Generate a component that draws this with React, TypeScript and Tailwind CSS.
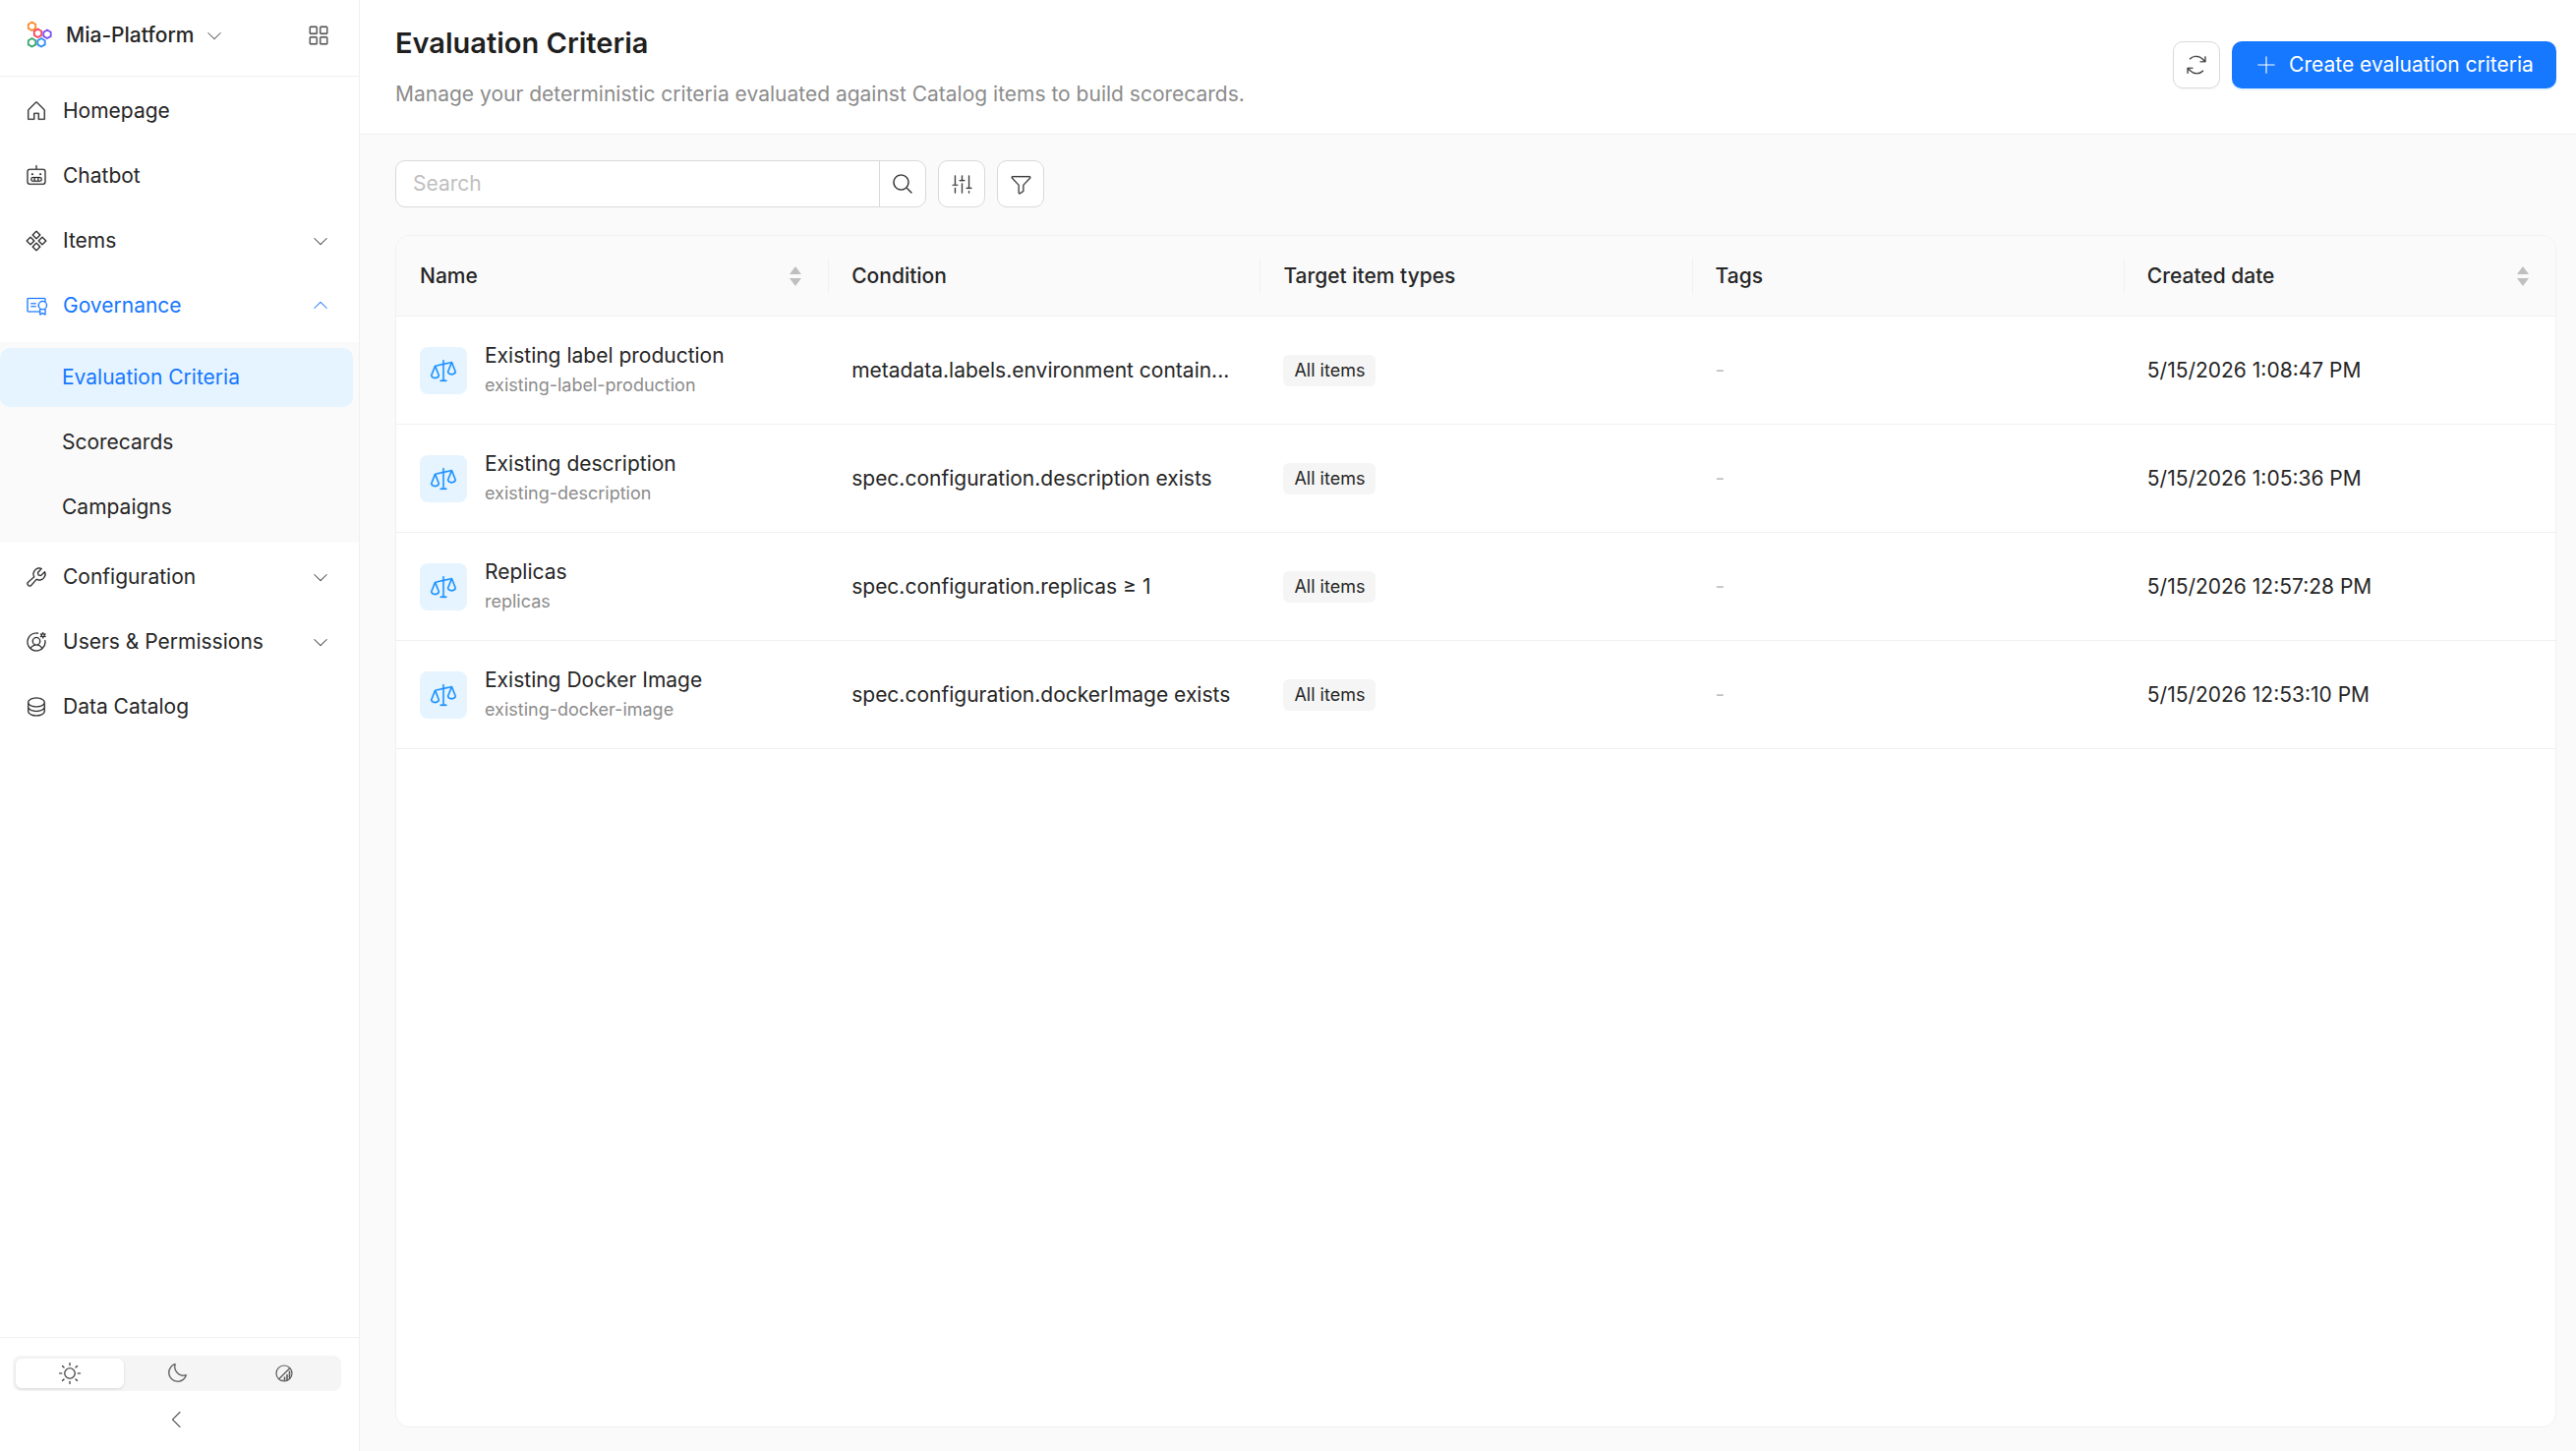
import React from "react";
import {
  PiHouseLight, PiRobotLight, PiDiamondsFourLight, PiCertificateLight, PiWrenchLight,
  PiUserCircleGearLight, PiDatabaseLight, PiSquaresFourLight, PiCaretDownLight, PiCaretUpLight,
  PiCaretLeftLight, PiArrowsClockwiseLight, PiPlusLight, PiMagnifyingGlassLight, PiFadersLight,
  PiFunnelLight, PiScalesLight, PiSunLight, PiMoonLight,
} from "react-icons/pi";

const W = 2;

const Logo = () => (
  <svg width="28" height="30" viewBox="0 0 28 30" fill="none" strokeWidth="1.8">
    <path d="M6.5 1.5l3.7 2.2v4.2L6.5 10 2.8 7.9V3.7z" stroke="#fa8c2b" />
    <path d="M12.5 8.5l3.7 2.2v4.2L12.5 17l-3.7-2.1v-4.2z" stroke="#f5465f" />
    <path d="M22 9.5l3.7 2.2v4.2L22 18l-3.7-2.1v-4.2z" stroke="#7b4ff0" />
    <path d="M6.5 18l3.7 2.2v4.2L6.5 26.5l-3.7-2.1v-4.2z" stroke="#35a86b" />
    <path d="M16 18l3.7 2.2v4.2L16 26.5l-3.7-2.1v-4.2z" stroke="#2f8df5" />
  </svg>
);

const Contrast = () => (
  <svg width="20" height="20" viewBox="0 0 20 20" fill="none">
    <circle cx="10" cy="10" r="8" stroke="#595959" strokeWidth="1.2" />
    <path d="M16 4.5L4.5 16" stroke="#595959" strokeWidth="1.2" />
    <path d="M8 16.5v1M10.5 13.5v4.5M13 11v6.3M15.5 7.5v8" stroke="#595959" strokeWidth="1.6" />
  </svg>
);

const Sort = () => (
  <svg width="14" height="20" viewBox="0 0 14 20" className="shrink-0">
    <path d="M7 0l6 8H1z" fill="#bfbfbf" />
    <path d="M7 20l6-8H1z" fill="#bfbfbf" />
  </svg>
);

type NavProps = { icon: React.ReactNode; label: string; caret?: "down" | "up"; active?: boolean };
const Nav = ({ icon, label, caret, active }: NavProps) => (
  <div className={`flex h-[66px] items-center pl-[25px] pr-[29px] text-[21px] ${active ? "text-[#1677ff]" : "text-[#262626]"}`}>
    <span className="flex w-[39px] shrink-0 text-[24px]">{icon}</span>
    <span className="flex-1">{label}</span>
    {caret === "down" && <PiCaretDownLight className="text-[20px] text-[#404040]" />}
    {caret === "up" && <PiCaretUpLight className="text-[20px] text-[#1677ff]" />}
  </div>
);

const Sub = ({ label, active }: { label: string; active?: boolean }) => (
  <div className={`flex h-[60px] items-center rounded-[10px] pl-[63px] text-[21px] ${active ? "bg-[#e6f4ff] text-[#1677ff]" : "text-[#262626]"}`}>
    {label}
  </div>
);

const rows = [
  { name: "Existing label production", id: "existing-label-production", cond: "metadata.labels.environment contain...", date: "5/15/2026 1:08:47 PM" },
  { name: "Existing description", id: "existing-description", cond: "spec.configuration.description exists", date: "5/15/2026 1:05:36 PM" },
  { name: "Replicas", id: "replicas", cond: "spec.configuration.replicas ≥ 1", date: "5/15/2026 12:57:28 PM" },
  { name: "Existing Docker Image", id: "existing-docker-image", cond: "spec.configuration.dockerImage exists", date: "5/15/2026 12:53:10 PM" },
];

const Th = ({ label, sort, first }: { label: string; sort?: boolean; first?: boolean }) => (
  <div className="flex items-center">
    {!first && <div className="h-[36px] w-px shrink-0 bg-[#f0f0f0]" />}
    <div className={`flex flex-1 items-center justify-between pr-[26px] text-[21px] font-medium text-[#262626] ${first ? "pl-[24px]" : "pl-[23px]"}`}>
      <span>{label}</span>
      {sort && <Sort />}
    </div>
  </div>
);

export default function App() {
  return (
    <div className="flex h-screen w-full overflow-hidden bg-white font-['Inter',sans-serif]">
      <aside className="flex w-[366px] shrink-0 flex-col border-r border-[#f0f0f0] bg-white">
        <div className="flex h-[78px] shrink-0 items-center border-b border-[#f0f0f0] pb-[6px] pl-[26px] pr-[27px]">
          <Logo />
          <span className="ml-[13px] text-[21px] font-medium text-[#262626]">Mia-Platform</span>
          <PiCaretDownLight className="ml-[10px] text-[20px] text-[#595959]" />
          <PiSquaresFourLight strokeWidth={W} className="ml-auto text-[28px] text-[#595959]" />
        </div>
        <nav className="flex flex-1 flex-col pt-[2px]">
          <Nav icon={<PiHouseLight strokeWidth={W} />} label="Homepage" />
          <Nav icon={<PiRobotLight strokeWidth={W} />} label="Chatbot" />
          <Nav icon={<PiDiamondsFourLight strokeWidth={W} />} label="Items" caret="down" />
          <Nav icon={<PiCertificateLight strokeWidth={W} />} label="Governance" caret="up" active />
          <div className="mb-[2px] mt-[4px] flex flex-col gap-[6px] bg-[#fafafa] py-[6px] pr-[6px]">
            <Sub label="Evaluation Criteria" active />
            <Sub label="Scorecards" />
            <Sub label="Campaigns" />
          </div>
          <Nav icon={<PiWrenchLight strokeWidth={W} />} label="Configuration" caret="down" />
          <Nav icon={<PiUserCircleGearLight strokeWidth={W} />} label="Users & Permissions" caret="down" />
          <Nav icon={<PiDatabaseLight strokeWidth={W} />} label="Data Catalog" />
        </nav>
        <div className="flex h-[116px] shrink-0 flex-col border-t border-[#f0f0f0] px-[13px] pb-[4px] pt-[18px]">
          <div className="flex h-[36px] w-[334px] items-center rounded-[8px] bg-[#f5f5f5] p-[3px]">
            <div className="flex h-[30px] w-[110px] items-center justify-center rounded-[6px] bg-white text-[24px] text-[#404040] shadow-[0_1px_3px_rgba(0,0,0,0.12)]">
              <PiSunLight strokeWidth={W} />
            </div>
            <div className="flex flex-1 items-center justify-center text-[24px] text-[#595959]">
              <PiMoonLight strokeWidth={W} />
            </div>
            <div className="flex w-[110px] items-center justify-center">
              <Contrast />
            </div>
          </div>
          <div className="flex w-[334px] flex-1 items-center justify-center text-[24px] text-[#595959]">
            <PiCaretLeftLight />
          </div>
        </div>
      </aside>

      <main className="flex min-w-0 flex-1 flex-col bg-[#fafafa]">
        <header className="flex h-[137px] shrink-0 items-center justify-between border-b border-[#f0f0f0] bg-white pl-[36px] pr-[20px]">
          <div className="mb-[1px] flex flex-col">
            <h1 className="text-[29px] font-semibold leading-[42px] text-[#1f1f1f]">Evaluation Criteria</h1>
            <p className="mt-[15px] text-[21px] leading-[32px] text-[#8c8c8c]">
              Manage your deterministic criteria evaluated against Catalog items to build scorecards.
            </p>
          </div>
          <div className="mb-[4px] flex items-center gap-[12px]">
            <button className="flex h-[48px] w-[48px] items-center justify-center rounded-[10px] border border-[#d9d9d9] bg-white text-[26px] text-[#404040] shadow-[0_2px_0_rgba(0,0,0,0.02)]">
              <PiArrowsClockwiseLight strokeWidth={W} />
            </button>
            <button className="flex h-[48px] w-[330px] items-center justify-center gap-[11px] rounded-[10px] bg-[#1677ff] text-[21px] text-white shadow-[0_2px_0_rgba(5,145,255,0.1)]">
              <PiPlusLight className="text-[24px]" />
              <span>Create evaluation criteria</span>
            </button>
          </div>
        </header>

        <div className="flex min-h-0 flex-1 flex-col px-[20px] pb-[24px] pl-[36px] pt-[26px]">
          <div className="flex items-center gap-[12px]">
            <div className="flex h-[48px] w-[540px] items-center rounded-[10px] border border-[#d9d9d9] bg-white">
              <span className="flex-1 pl-[17px] text-[21px] text-[#bfbfbf]">Search</span>
              <span className="flex h-full w-[47px] items-center justify-center border-l border-[#d9d9d9] text-[24px] text-[#262626]">
                <PiMagnifyingGlassLight strokeWidth={W} />
              </span>
            </div>
            <button className="flex h-[48px] w-[48px] items-center justify-center rounded-[10px] border border-[#d9d9d9] bg-white text-[25px] text-[#404040]">
              <PiFadersLight strokeWidth={W} />
            </button>
            <button className="flex h-[48px] w-[48px] items-center justify-center rounded-[10px] border border-[#d9d9d9] bg-white text-[25px] text-[#404040]">
              <PiFunnelLight strokeWidth={W} />
            </button>
          </div>

          <div className="mt-[28px] flex min-h-0 flex-1 flex-col overflow-hidden rounded-[14px] border border-[#f0f0f0] bg-white">
            <div className="grid h-[82px] shrink-0 grid-cols-5 border-b border-[#f0f0f0] bg-[#fafafa]">
              <Th label="Name" sort first />
              <Th label="Condition" />
              <Th label="Target item types" />
              <Th label="Tags" />
              <Th label="Created date" sort />
            </div>
            {rows.map((r) => (
              <div key={r.id} className="grid h-[110px] shrink-0 grid-cols-5 items-center border-b border-[#f0f0f0] text-[21px] text-[#262626]">
                <div className="flex items-center gap-[18px] pl-[24px]">
                  <span className="flex h-[48px] w-[48px] shrink-0 items-center justify-center rounded-[8px] bg-[#e6f4ff] text-[30px] text-[#1890ff]">
                    <PiScalesLight strokeWidth={W} />
                  </span>
                  <div className="flex flex-col">
                    <span className="leading-[30px]">{r.name}</span>
                    <span className="text-[18px] leading-[30px] text-[#8c8c8c]">{r.id}</span>
                  </div>
                </div>
                <div className="pl-[24px]">{r.cond}</div>
                <div className="pl-[24px]">
                  <span className="inline-flex h-[32px] items-center rounded-[6px] bg-[#f5f5f5] px-[11px] text-[18px] text-[#262626]">All items</span>
                </div>
                <div className="pl-[24px] text-[#bfbfbf]">-</div>
                <div className="pl-[24px]">{r.date}</div>
              </div>
            ))}
          </div>
        </div>
      </main>
    </div>
  );
}
